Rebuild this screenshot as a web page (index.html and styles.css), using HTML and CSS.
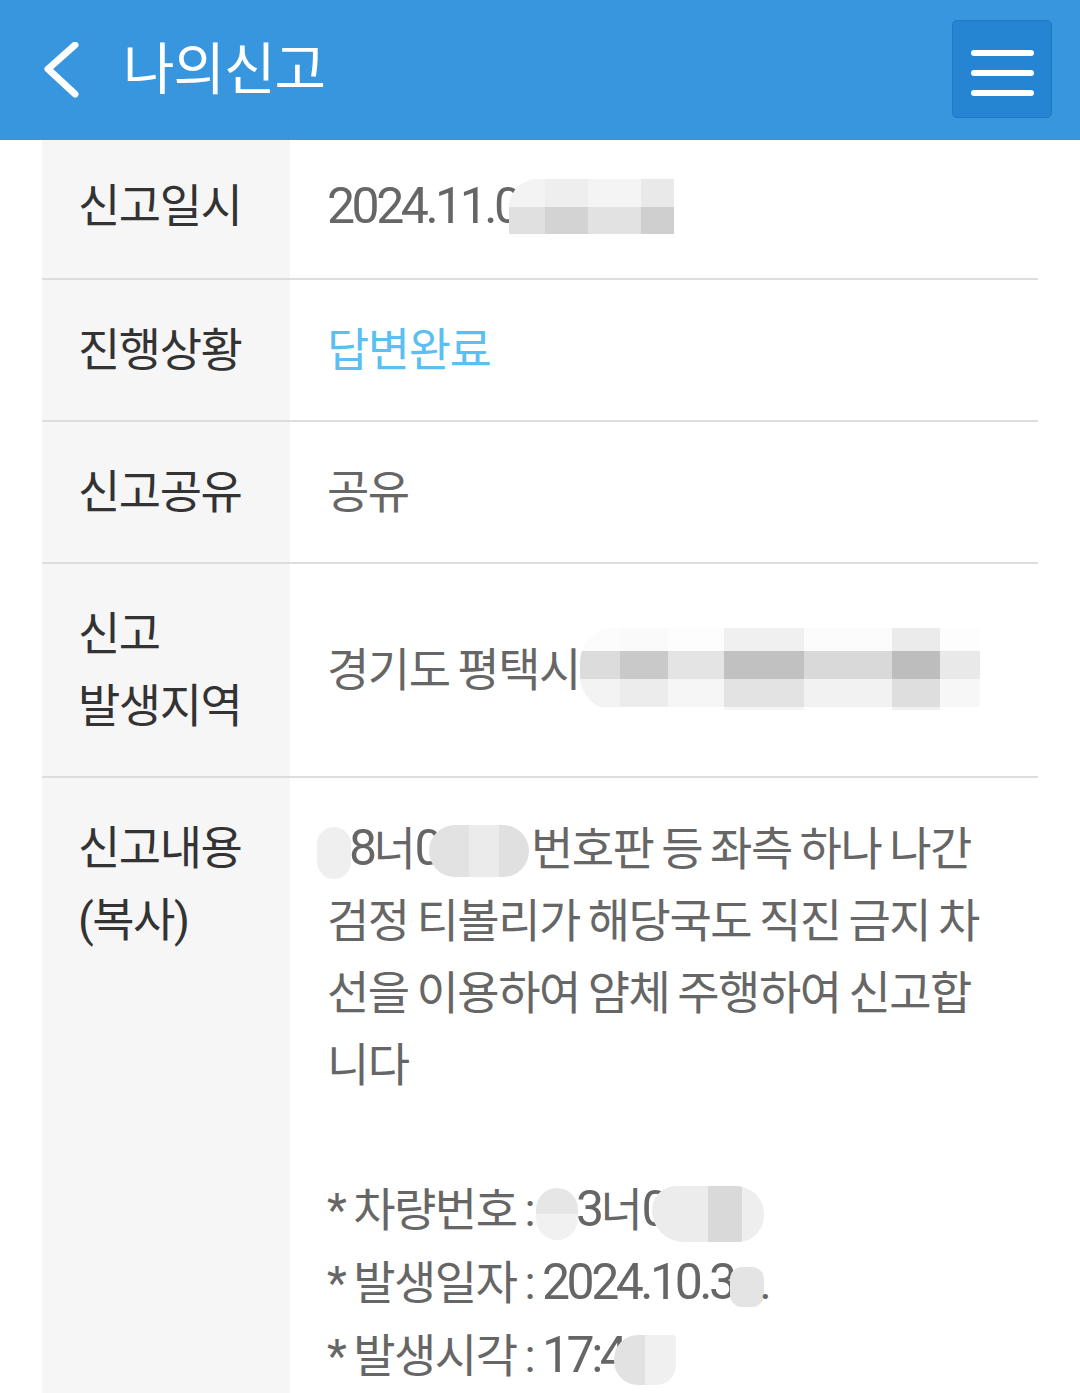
FILE: index.html
```html
<!DOCTYPE html>
<html lang="ko">
<head>
  <meta charset="UTF-8" />
  <meta name="viewport" content="width=device-width, initial-scale=1.0"/>
  <title>나의신고</title>
  <link rel="stylesheet" href="styles.css">
</head>
<body>
  <header class="topbar">
    <a class="back" href="#">
      <svg width="36" height="56" viewBox="0 0 36 56"><polyline points="31,3 4,27 31,52" fill="none" stroke="#fff" stroke-width="7" stroke-linecap="round" stroke-linejoin="round"/></svg>
    </a>
    <h1 class="title">나의신고</h1>
    <button class="menu" type="button">
      <span></span><span></span><span></span>
    </button>
  </header>

  <div class="report">
    <div class="row first">
      <div class="label">신고일시</div>
      <div class="value"><span class="num">2024.11.0</span><span class="mask m-date"></span></div>
    </div>
    <div class="row">
      <div class="label">진행상황</div>
      <div class="value status">답변완료</div>
    </div>
    <div class="row">
      <div class="label">신고공유</div>
      <div class="value">공유</div>
    </div>
    <div class="row">
      <div class="label">신고<br>발생지역</div>
      <div class="value">경기도 평택시 <span class="mask m-addr"></span></div>
    </div>
    <div class="row">
      <div class="label">신고내용<br>(복사)</div>
      <div class="value text">
        <p><span class="mask m-a"></span><span class="num">8</span>너<span class="num">0</span><span class="mask m-b"></span> 번호판 등 좌측 하나 나간<br>검정 티볼리가 해당국도 직진 금지 차<br>선을 이용하여 얌체 주행하여 신고합<br>니다</p>
        <p><br></p>
        <p>* 차량번호 : <span class="mask m-c"></span><span class="num">3</span>너<span class="num">0</span><span class="mask m-d"></span><br>* 발생일자 : <span class="num">2024.10.3</span><span class="mask m-e"></span>.<br>* 발생시각 : <span class="num">17:4</span><span class="mask m-f"></span></p>
      </div>
    </div>
  </div>
</body>
</html>
```

FILE: styles.css
```css
body { margin: 0; background: #fff; font-family: Roboto, "Noto Sans CJK KR", sans-serif; }

.topbar { display: flex; align-items: center; height: 140px; padding: 0 28px 0 44px; background: #3896df; }
.back { display: flex; width: 36px; height: 56px; }
.title { flex: 1; margin: 0 0 0 43px; color: #fff; font-size: 56px; font-weight: 400; letter-spacing: -1px; line-height: 1; }
.menu { display: flex; flex-direction: column; align-items: center; gap: 14px; width: 100px; height: 98px; padding: 29px 0 0; margin-top: -2px;
  background: #2585d2; border: 1px solid #1f79c4; border-radius: 5px; box-sizing: border-box; }
.menu span { display: block; width: 63px; height: 6px; border-radius: 3px; background: #fff; }

.report { margin: 0 42px; }
.row { display: grid; grid-template-columns: 248px 1fr; border-bottom: 2px solid #ddd; font-size: 46px; line-height: 72px; letter-spacing: -1.5px; word-spacing: -2px; }
.label { padding: 34px 0 34px 36px; background: #f6f6f6; color: #333; }
.value { display: flex; align-items: center; padding: 34px 10px 34px 37px; color: #666; white-space: nowrap; }
.row.first .label, .row.first .value { padding-top: 30px; padding-bottom: 36px; }
.status { color: #5bbff2; }
.text { display: block; align-self: start; }
.text p { margin: 0; }
.num { font-size: 50px; letter-spacing: -3.5px; }

.mask { display: inline-block; vertical-align: middle; border-radius: 22px; background: #e9e9e9; letter-spacing: 0; }
.m-date { width: 165px; height: 55px; margin: -6px 0 -6px -10px; border-radius: 28px 0 0 0;
  background: linear-gradient(90deg, rgba(255,255,255,0.3) 0 22%, rgba(0,0,0,0) 22% 48%, rgba(255,255,255,0.35) 48% 80%, rgba(0,0,0,0.02) 80%),
              linear-gradient(#eeeeee 0 50%, #d3d3d3 50%); }
.m-addr { width: 400px; height: 82px; margin: -10px 0 -8px 0; border-radius: 34px 0 0 34px;
  background: linear-gradient(90deg, rgba(255,255,255,0.35) 0 10%, rgba(0,0,0,0) 10% 22%, rgba(255,255,255,0.5) 22% 36%, rgba(0,0,0,0.04) 36% 56%, rgba(255,255,255,0.3) 56% 78%, rgba(0,0,0,0.06) 78% 90%, rgba(255,255,255,0.6) 90%),
              linear-gradient(#fafafa 0 28%, #c9c9c9 28% 62%, #ececec 62% 96%, #fff 96%); }
.m-a { width: 34px; height: 52px; margin: 0 -2px 0 -10px; background: #efefef; }
.m-b { width: 100px; height: 52px; margin: -4px -6px 0 -10px; border-radius: 26px; background: linear-gradient(90deg, #e2e2e2 0 40%, #ebebeb 40% 70%, #e0e0e0 70%); }
.m-c { width: 42px; height: 52px; margin: 0 -2px 0 -6px; background: linear-gradient(#e6e6e6 0 50%, #f1f1f1 50%); }
.m-d { width: 112px; height: 56px; margin: 0 0 0 -14px; border-radius: 26px 30px 28px 34px; background: linear-gradient(90deg, #ececec 0 50%, #d9d9d9 50% 80%, #eeeeee 80%); }
.m-e { width: 34px; height: 40px; margin: 0 -4px 0 -4px; border-radius: 12px; background: #e4e4e4; }
.m-f { width: 62px; height: 50px; margin: 0 0 0 -10px; border-radius: 24px 4px 20px 24px; background: linear-gradient(90deg, #e2e2e2 0 50%, #f0f0f0 50%); }
```
